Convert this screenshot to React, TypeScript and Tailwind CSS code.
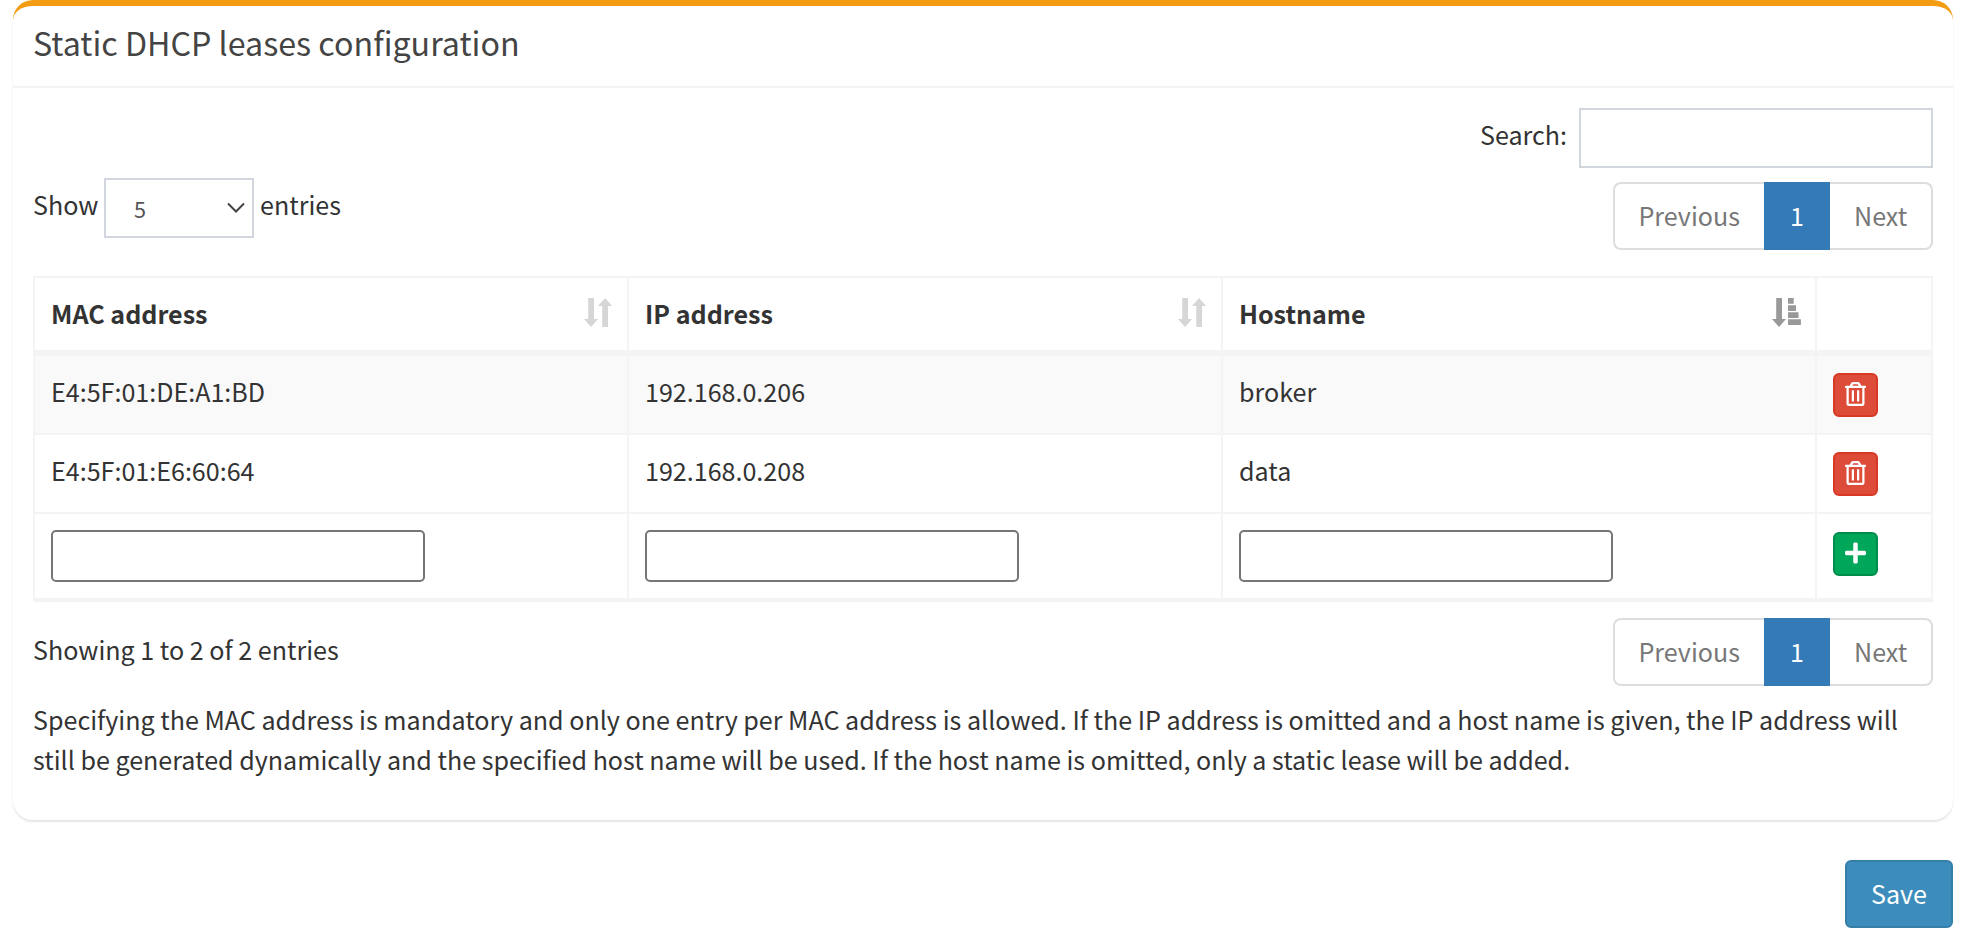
import React from "react";

const leases = [
  { mac: "E4:5F:01:DE:A1:BD", ip: "192.168.0.206", host: "broker" },
  { mac: "E4:5F:01:E6:60:64", ip: "192.168.0.208", host: "data" },
];

function SortBoth() {
  return (
    <svg width="28" height="30" viewBox="0 0 28 30" className="text-[#d6d6d6]" fill="currentColor">
      <path d="M4.200 0h5.800v21h4l-6.900 8L0 21h4.200z" />
      <path d="M18.200 29h5.800V8h4l-6.900-8L14 8h4.200z" />
    </svg>
  );
}

function SortAsc() {
  return (
    <svg width="30" height="30" viewBox="0 0 30 30" className="text-[#999999]" fill="currentColor">
      <path d="M4.200 0h5.800v21h4l-7 8l-7-8h4.200z" />
      <path d="M16 0h5.700v5.700H16zM16 7.200h8v5.700h-8zM16 14.300h10.500v5.700H16zM16 21.300h12.900v5.700H16z" />
    </svg>
  );
}

function Trash() {
  return (
    <svg width="21" height="24" viewBox="0 0 448 512" fill="currentColor">
      <path d="M268 416h24a12 12 0 0 0 12-12V188a12 12 0 0 0-12-12h-24a12 12 0 0 0-12 12v216a12 12 0 0 0 12 12zM432 80h-82.410l-34-56.700A48 48 0 0 0 274.410 0H173.590a48 48 0 0 0-41.160 23.300L98.410 80H16A16 16 0 0 0 0 96v16a16 16 0 0 0 16 16h16v336a48 48 0 0 0 48 48h288a48 48 0 0 0 48-48V128h16a16 16 0 0 0 16-16V96a16 16 0 0 0-16-16zM171.840 50.910A6 6 0 0 1 177 48h94a6 6 0 0 1 5.150 2.910L293.610 80H154.390zM368 464H80V128h288zm-212-48h24a12 12 0 0 0 12-12V188a12 12 0 0 0-12-12h-24a12 12 0 0 0-12 12v216a12 12 0 0 0 12 12z" />
    </svg>
  );
}

function Plus() {
  return (
    <svg width="21" height="24" viewBox="0 0 448 512" fill="currentColor">
      <path d="M416 208H272V64c0-17.670-14.330-32-32-32h-32c-17.670 0-32 14.330-32 32v144H32c-17.670 0-32 14.330-32 32v32c0 17.670 14.330 32 32 32h144v144c0 17.670 14.330 32 32 32h32c17.670 0 32-14.330 32-32V304h144c17.670 0 32-14.330 32-32v-32c0-17.670-14.330-32-32-32z" />
    </svg>
  );
}

function Pagination() {
  return (
    <nav className="flex h-[68px] w-[320px] leading-[63px] text-[#777777]">
      <a className="w-[151px] rounded-l-[8px] border-2 border-r-0 border-[#dddddd] pl-[23.500px]">Previous</a>
      <a className="w-[66px] bg-[#337ab7] pt-[2px] text-center text-white">1</a>
      <a className="w-[103px] rounded-r-[8px] border-2 border-l-0 border-[#dddddd] pl-[24px]">Next</a>
    </nav>
  );
}

const cell = "border-r-2 border-[#f4f4f4] pl-[16px]";

export default function App() {
  return (
    <main
      className="h-[946px] w-[1968px] overflow-hidden bg-white pl-[13px] text-[25.080px] leading-[40px] text-[#333333]"
      style={{ fontFamily: '"Noto Sans CJK SC", sans-serif' }}
    >
      <section className="h-[820px] w-[1940px] rounded-[20px] border-t-[6px] border-[#f39c12] shadow-[0_2px_2px_rgba(0,0,0,0.1)]">
        <h3 className="h-[82px] border-b-2 border-[#f4f4f4] pt-[14px] pl-[20px] text-[32.200px] leading-[44px] text-[#444444]">
          Static DHCP leases configuration
        </h3>

        <div className="px-[20px] pt-[20px]">
          <div className="flex h-[168px] justify-between">
            <div className="mt-[70px] flex h-[60px] items-center">
              <span className="mt-[-8px] w-[65px]">Show</span>
              <span className="mr-[6px] ml-[6px] flex h-[60px] w-[150px] items-center justify-between border-2 border-[#d2d6de] pr-[7px] pl-[28px] text-[21.600px] text-[#555555]">
                <span className="mt-[1px]">5</span>
                <svg width="18" height="12" viewBox="0 0 18 12" fill="none" stroke="#444444" strokeWidth="2">
                  <path d="M1 1.500l8 8l8-8" />
                </svg>
              </span>
              <span className="mt-[-8px]">entries</span>
            </div>
            <div className="flex flex-col items-end">
              <label className="flex items-center">
                <span className="mt-[-8px] mr-[12px]">Search:</span>
                <input className="h-[60px] w-[354px] border-2 border-[#d2d6de]" />
              </label>
              <div className="mt-[14px]">
                <Pagination />
              </div>
            </div>
          </div>

          <div className="w-[1900px] border-t-2 border-l-2 border-b-4 border-[#f4f4f4]">
            <div className="grid h-[78px] grid-cols-[594px_594px_594px_116px] border-b-[6px] border-[#f4f4f4] leading-[71px] font-bold">
              <div className={cell + " flex justify-between pr-[15px]"}>
                MAC address
                <span className="mt-[20px]"><SortBoth /></span>
              </div>
              <div className={cell + " flex justify-between pr-[15px]"}>
                IP address
                <span className="mt-[20px]"><SortBoth /></span>
              </div>
              <div className={cell + " flex justify-between pr-[13px]"}>
                Hostname
                <span className="mt-[20px]"><SortAsc /></span>
              </div>
              <div className={cell} />
            </div>
            {leases.map((l) => (
              <div
                key={l.mac}
                className="grid h-[79px] grid-cols-[594px_594px_594px_116px] border-b-2 border-[#f4f4f4] leading-[70px] odd:bg-white even:bg-[#f9f9f9]"
              >
                <div className={cell}>{l.mac}</div>
                <div className={cell}>{l.ip}</div>
                <div className={cell}>{l.host}</div>
                <div className={cell + " pt-[17px]"}>
                  <button className="flex h-[44px] w-[45px] items-center justify-center rounded-[6px] border-2 border-[#d73925] bg-[#dd4b39] pb-[2px] text-white">
                    <Trash />
                  </button>
                </div>
              </div>
            ))}
            <div className="grid h-[84px] grid-cols-[594px_594px_594px_116px]">
              {["mac", "ip", "host"].map((k) => (
                <div key={k} className={cell + " pt-[16px]"}>
                  <input className="block h-[52px] w-[374px] rounded-[5px] border-2 border-[#767676]" />
                </div>
              ))}
              <div className={cell + " pt-[18px]"}>
                <button className="flex h-[44px] w-[45px] items-center justify-center rounded-[6px] border-2 border-[#008d4c] bg-[#00a65a] pb-[2px] text-white">
                  <Plus />
                </button>
              </div>
            </div>
          </div>

          <div className="mt-[16px] flex justify-between">
            <div className="mt-[11px]">Showing 1 to 2 of 2 entries</div>
            <Pagination />
          </div>
          <p className="mt-[13px] whitespace-nowrap">
            Specifying the MAC address is mandatory and only one entry per MAC address is allowed. If the IP address is omitted and a host name is given, the IP address will
            <br />
            still be generated dynamically and the specified host name will be used. If the host name is omitted, only a static lease will be added.
          </p>
        </div>
      </section>
      <div className="mt-[40px] flex justify-end pr-[15px]">
        <button className="h-[68px] w-[108px] rounded-[6px] border-2 border-[#367fa9] bg-[#3c8dbc] pb-[2px] text-white">
          Save
        </button>
      </div>
    </main>
  );
}
